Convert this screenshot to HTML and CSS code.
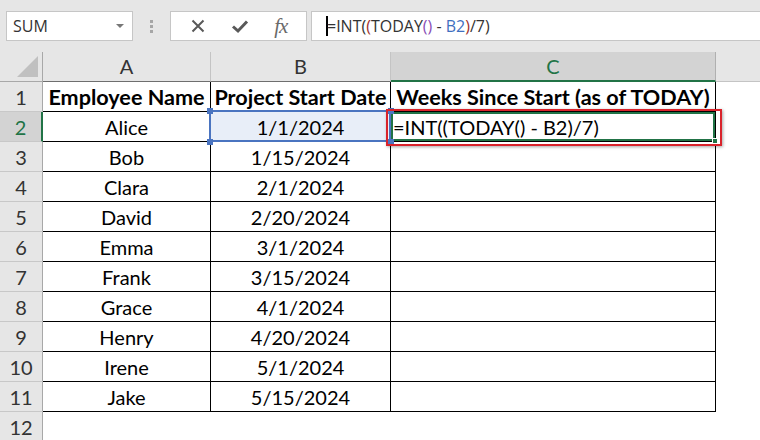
FILE: index.html
```html
<!DOCTYPE html>
<html>
<head>
<meta charset="utf-8">
<link rel="stylesheet" href="styles.css">
</head>
<body>
<div class="toolbar">
  <div class="namebox"><span class="nb-text">SUM</span><span class="nb-arrow"></span></div>
  <div class="grip"><i></i><i></i><i></i></div>
  <div class="fbtns">
    <svg class="ic" width="16" height="16" viewBox="0 0 16 16"><path d="M2.5 2.5 L13.5 13.5 M13.5 2.5 L2.5 13.5" stroke="#595959" stroke-width="2" fill="none"/></svg>
    <svg class="ic" width="18" height="16" viewBox="0 0 18 16"><path d="M2 8.5 L7 13 L16 3.5" stroke="#595959" stroke-width="3" fill="none"/></svg>
    <span class="fx">fx</span>
  </div>
  <div class="finput"><span class="caret"></span><span>=INT(</span><span class="p-red">(</span><span>TODAY</span><span class="p-purple">()</span><span> - </span><span class="p-blue">B2</span><span class="p-red">)</span><span>/7)</span></div>
</div>
<div class="sheet">
  <div class="corner"><span class="tri"></span></div>
  <div class="colhead">A</div>
  <div class="colhead">B</div>
  <div class="colhead sel">C</div>
  <div class="colhead last"></div>

  <div class="rowhead">1</div>
  <div class="cell b">Employee Name</div>
  <div class="cell b">Project Start Date</div>
  <div class="cell b">Weeks Since Start (as of TODAY)</div>
  <div class="blank"></div>

  <div class="rowhead sel">2</div>
  <div class="cell">Alice</div>
  <div class="cell ref">1/1/2024<i class="h tl"></i><i class="h tr"></i><i class="h bl"></i><i class="h br"></i></div>
  <div class="cell active">=INT((TODAY() - B2)/7)<i class="fill"></i><span class="mark"></span></div>
  <div class="blank"></div>

  <div class="rowhead">3</div><div class="cell">Bob</div><div class="cell">1/15/2024</div><div class="cell"></div><div class="blank"></div>
  <div class="rowhead">4</div><div class="cell">Clara</div><div class="cell">2/1/2024</div><div class="cell"></div><div class="blank"></div>
  <div class="rowhead">5</div><div class="cell">David</div><div class="cell">2/20/2024</div><div class="cell"></div><div class="blank"></div>
  <div class="rowhead">6</div><div class="cell">Emma</div><div class="cell">3/1/2024</div><div class="cell"></div><div class="blank"></div>
  <div class="rowhead">7</div><div class="cell">Frank</div><div class="cell">3/15/2024</div><div class="cell"></div><div class="blank"></div>
  <div class="rowhead">8</div><div class="cell">Grace</div><div class="cell">4/1/2024</div><div class="cell"></div><div class="blank"></div>
  <div class="rowhead">9</div><div class="cell">Henry</div><div class="cell">4/20/2024</div><div class="cell"></div><div class="blank"></div>
  <div class="rowhead">10</div><div class="cell">Irene</div><div class="cell">5/1/2024</div><div class="cell"></div><div class="blank"></div>
  <div class="rowhead">11</div><div class="cell">Jake</div><div class="cell">5/15/2024</div><div class="cell"></div><div class="blank"></div>
  <div class="rowhead">12</div><div class="blank"></div><div class="blank"></div><div class="blank"></div><div class="blank"></div>
</div>
</body>
</html>
```
FILE: styles.css
```css
* { box-sizing: border-box; }
html, body { margin: 0; padding: 0; }
body {
  width: 760px;
  height: 440px;
  overflow: hidden;
  background: #fff;
  font-family: "Lato", "Liberation Sans", sans-serif;
}
.toolbar {
  height: 52px;
  background: #e6e6e6;
  display: flex;
  align-items: flex-start;
  padding: 11px 0 0 6px;
}
.namebox {
  width: 127px;
  height: 30px;
  background: #fff;
  border: 1px solid #c6c6c6;
  display: flex;
  align-items: center;
  justify-content: space-between;
  padding: 0 8px 0 6px;
  font-family: "Open Sans", "Noto Sans", sans-serif;
  font-size: 16px;
  color: #333;
}
.nb-arrow {
  width: 0; height: 0;
  border-left: 4px solid transparent;
  border-right: 4px solid transparent;
  border-top: 4px solid #777;
}
.grip {
  width: 37px;
  height: 30px;
  display: flex;
  flex-direction: column;
  align-items: center;
  justify-content: center;
  gap: 2px;
}
.grip i { display: block; width: 3px; height: 3px; background: #a6a6a6; }
.fbtns {
  width: 137px;
  height: 30px;
  background: #fff;
  border: 1px solid #c6c6c6;
  display: flex;
  align-items: center;
  justify-content: space-around;
  padding: 0 6px;
}
.fx {
  font-family: "Liberation Serif", serif;
  font-style: italic;
  font-size: 21px;
  color: #6a6a6a;
  letter-spacing: -1px;
}
.finput {
  flex: 1;
  margin-left: 4px;
  height: 30px;
  background: #fff;
  border: 1px solid #c6c6c6;
  border-right: none;
  display: flex;
  align-items: center;
  padding-left: 14px;
  font-family: "Open Sans", "Noto Sans", sans-serif;
  font-size: 16px;
  color: #333;
  white-space: pre;
}
.caret { display: block; width: 2px; height: 20px; background: #000; margin-right: -1px; }
.p-red { color: #a0322e; }
.p-purple { color: #8a4fb6; }
.p-blue { color: #3f6fbf; }

.sheet {
  display: grid;
  grid-template-columns: 43px 168px 180px 325px 44px;
  grid-auto-rows: 30px;
}
.corner {
  background: #e6e6e6;
  border-right: 1px solid #a8a8a8;
  border-bottom: 1px solid #a8a8a8;
  position: relative;
}
.tri {
  position: absolute;
  right: 4px;
  bottom: 4px;
  width: 0; height: 0;
  border-left: 21px solid transparent;
  border-bottom: 21px solid #c0c0c0;
}
.colhead {
  background: #e6e6e6;
  border-right: 1px solid #c4c4c4;
  border-bottom: 1px solid #6e6e6e;
  text-align: center;
  font-size: 20px;
  line-height: 29px;
  color: #333;
}
.colhead.sel {
  background: #d3d3d3;
  color: #217346;
  border-bottom: 2px solid #217346;
  border-right-color: #b0b0b0;
}
.colhead.last { border-right: none; border-bottom-color: #c4c4c4; }
.rowhead {
  background: #e6e6e6;
  border-right: 1px solid #a8a8a8;
  border-bottom: 1px solid #c8c8c8;
  text-align: center;
  font-size: 20px;
  line-height: 30px;
  color: #333;
}
.rowhead.sel {
  background: #d3d3d3;
  color: #217346;
  border-right: 2px solid #217346;
}
.cell {
  border-right: 1px solid #000;
  border-bottom: 1px solid #000;
  text-align: center;
  font-size: 20px;
  line-height: 31px;
  color: #000;
  white-space: nowrap;
  position: relative;
}
.cell.b { font-weight: 700; font-size: 21.6px; }
.blank { background: #fff; }
.ref { background: #e8eef8; }
.ref::after {
  content: "";
  position: absolute;
  left: -2px; top: -2px; right: -1px; bottom: -1px;
  border: 2px solid #4a74c0;
}
.h {
  position: absolute;
  width: 6px; height: 6px;
  background: #4a74c0;
  z-index: 2;
}
.h.tl { left: -4px; top: -4px; }
.h.tr { right: -4px; top: -4px; }
.h.bl { left: -4px; bottom: -4px; }
.h.br { right: -4px; bottom: -4px; }
.active { text-align: left; padding-left: 2px; }
.active::before {
  content: "";
  position: absolute;
  left: 0; top: 0; right: 0; bottom: 0;
  border: 2px solid #217346;
}
.fill {
  position: absolute;
  right: -3px; bottom: -3px;
  width: 6px; height: 6px;
  background: #217346;
  border: 1px solid #fff;
  z-index: 2;
}
.mark {
  position: absolute;
  left: -5px; top: -3px; right: -7px; bottom: -5px;
  border: 2px solid #d9232b;
  box-shadow: 1px 1px 3px rgba(0,0,0,0.35);
  z-index: 3;
}
```
